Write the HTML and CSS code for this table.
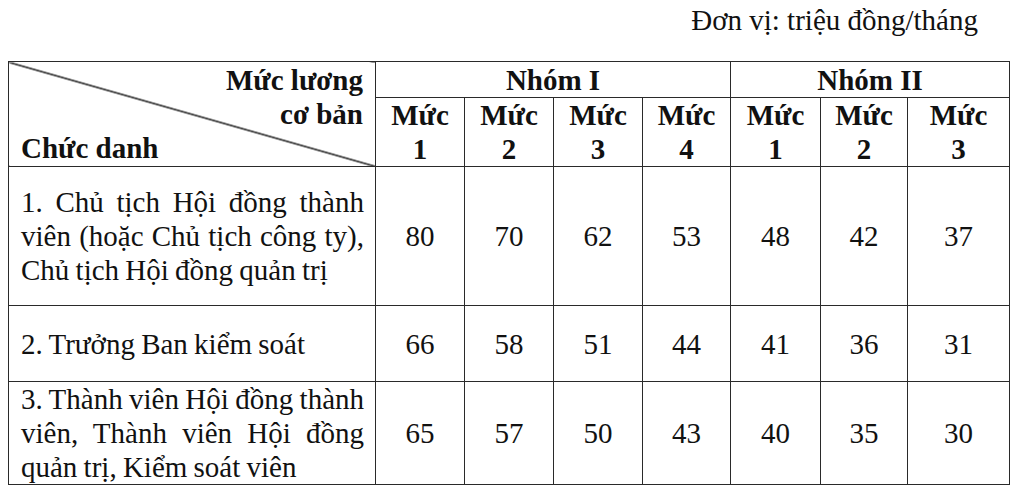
FILE: index.html
```html
<!DOCTYPE html>
<html lang="vi">
<head>
<meta charset="utf-8">
<title>Mức lương cơ bản</title>
<link rel="stylesheet" href="styles.css">
</head>
<body>
<div class="page">
  <p class="unit">Đơn vị: triệu đồng/tháng</p>
  <table class="salary">
    <colgroup>
      <col class="c-title">
      <col class="c-89">
      <col class="c-89">
      <col class="c-89">
      <col class="c-88">
      <col class="c-90">
      <col class="c-87">
      <col class="c-102">
    </colgroup>
    <thead>
      <tr class="r-group">
        <th class="corner" rowspan="2">
          <div class="corner-top">Mức lương<br>cơ bản</div>
          <div class="corner-bottom">Chức danh</div>
        </th>
        <th colspan="4">Nhóm I</th>
        <th colspan="3">Nhóm II</th>
      </tr>
      <tr class="r-level">
        <th>Mức<br>1</th>
        <th>Mức<br>2</th>
        <th>Mức<br>3</th>
        <th>Mức<br>4</th>
        <th>Mức<br>1</th>
        <th>Mức<br>2</th>
        <th>Mức<br>3</th>
      </tr>
    </thead>
    <tbody>
      <tr class="r-1">
        <td class="title">1. Chủ tịch Hội đồng thành viên (hoặc Chủ tịch công ty), Chủ tịch Hội đồng quản trị</td>
        <td>80</td><td>70</td><td>62</td><td>53</td><td>48</td><td>42</td><td>37</td>
      </tr>
      <tr class="r-2">
        <td class="title">2. Trưởng Ban kiểm soát</td>
        <td>66</td><td>58</td><td>51</td><td>44</td><td>41</td><td>36</td><td>31</td>
      </tr>
      <tr class="r-3">
        <td class="title">3. Thành viên Hội đồng thành viên, Thành viên Hội đồng quản trị, Kiểm soát viên</td>
        <td>65</td><td>57</td><td>50</td><td>43</td><td>40</td><td>35</td><td>30</td>
      </tr>
    </tbody>
  </table>
</div>
</body>
</html>
```
FILE: styles.css
```css
html, body {
  margin: 0;
  padding: 0;
  background: #ffffff;
}

body {
  font-family: "Liberation Serif", "Times New Roman", serif;
  font-size: 29px;
  line-height: 34px;
  color: #111111;
}

.page {
  width: 1020px;
  height: 489px;
  overflow: hidden;
}

.unit {
  margin: 0 0 24px 0;
  padding: 3px 42px 0 0;
  text-align: right;
}

.salary {
  margin-left: 8px;
  width: 1001px;
  table-layout: fixed;
  border-collapse: collapse;
}

.salary th,
.salary td {
  border: 1px solid #2a2a2a;
  padding: 0;
  text-align: center;
  vertical-align: middle;
}

.salary th {
  font-weight: bold;
}

.c-title { width: 367px; }
.c-89 { width: 89px; }
.c-88 { width: 88px; }
.c-90 { width: 90px; }
.c-87 { width: 87px; }
.c-102 { width: 102px; }

.r-group { height: 36px; }
.r-level { height: 68px; }
.r-1 { height: 139px; }
.r-2 { height: 76px; }
.r-3 { height: 101px; }

.salary th.corner {
  padding: 0 12px;
  text-align: left;
  background: linear-gradient(to top right,
    transparent calc(50% - 1.2px),
    #2a2a2a calc(50% - 0.4px),
    #2a2a2a calc(50% + 0.4px),
    transparent calc(50% + 1.2px));
}

.corner-top {
  text-align: right;
}

.corner-bottom {
  text-align: left;
}

.salary td.title {
  padding: 0 11px 0 12px;
  text-align: justify;
  word-spacing: -1px;
}
```
